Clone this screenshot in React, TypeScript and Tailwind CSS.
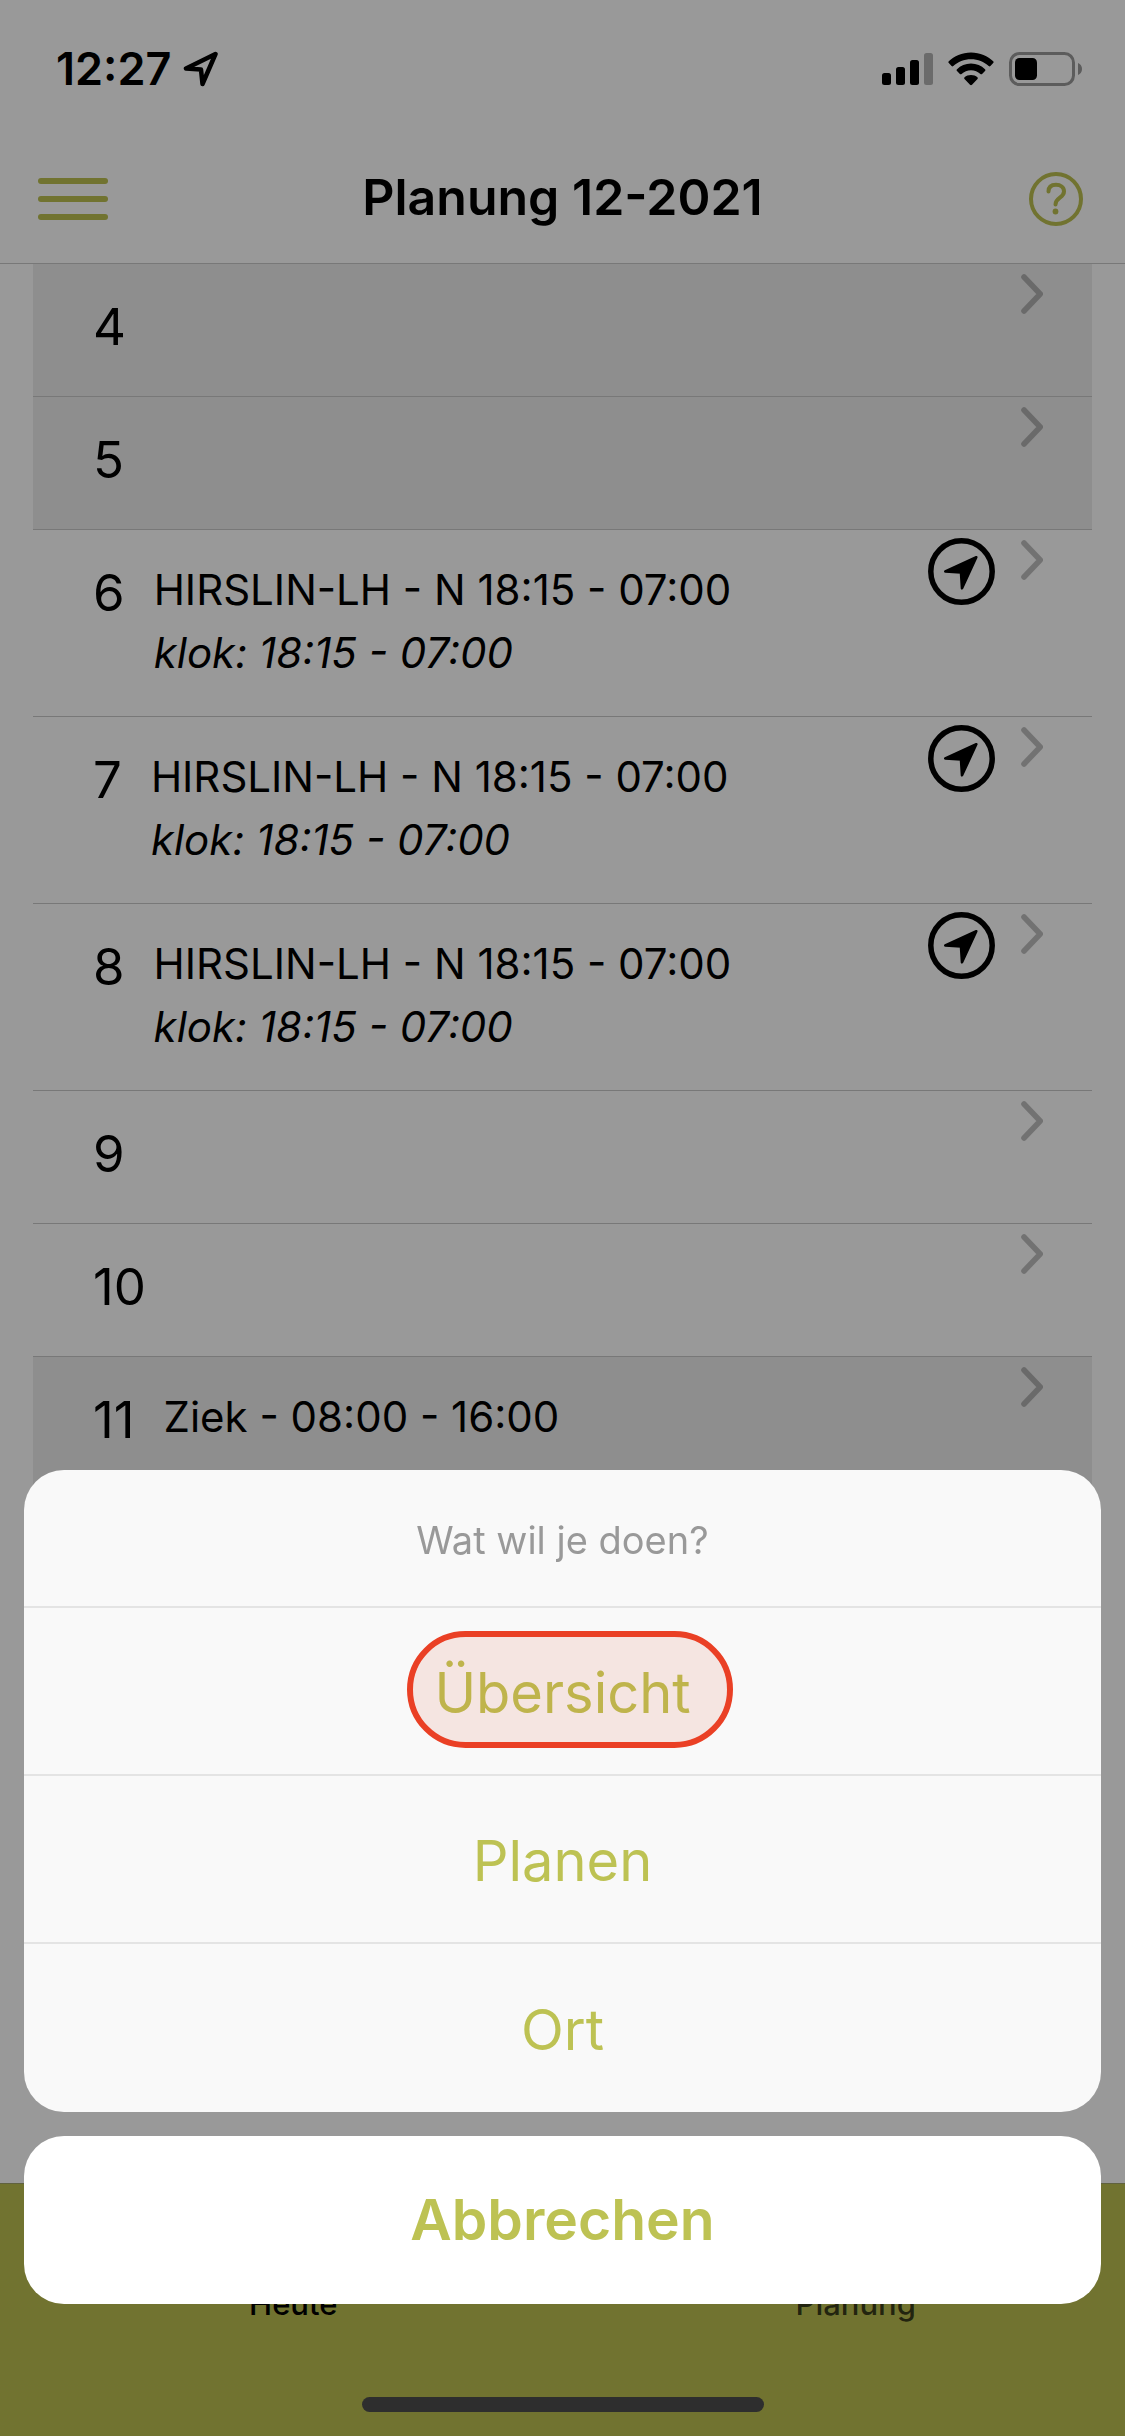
type Day = {
  day: number;
  shift?: string;
  clock?: string;
  muted?: boolean;
};

const days: Day[] = [
  { day: 4, muted: true },
  { day: 5, muted: true },
  { day: 6, shift: "HIRSLIN-LH - N 18:15 - 07:00", clock: "klok: 18:15 - 07:00" },
  { day: 7, shift: "HIRSLIN-LH - N 18:15 - 07:00", clock: "klok: 18:15 - 07:00" },
  { day: 8, shift: "HIRSLIN-LH - N 18:15 - 07:00", clock: "klok: 18:15 - 07:00" },
  { day: 9 },
  { day: 10 },
  { day: 11, shift: "Ziek - 08:00 - 16:00", muted: true },
];

function StatusBar() {
  return (
    <div className="flex items-center justify-between h-[138px] pl-[56px] pr-[42px]">
      <div className="flex items-center gap-3">
        <span className="text-[45px] leading-[54px] font-semibold">12:27</span>
        <svg className="w-9 h-9" viewBox="0 0 36 36" fill="none" stroke="black" strokeWidth="4.5" strokeLinejoin="round">
          <path d="M32.5 3 L3 17.5 L18 18.5 L19.5 33 Z" />
        </svg>
      </div>
      <div className="flex items-center gap-[15px]">
        <svg className="w-[51px] h-[34px]" viewBox="0 0 51 34">
          <rect x="0" y="21" width="9" height="12" rx="2.5" />
          <rect x="14" y="15" width="9" height="18" rx="2.5" />
          <rect x="28" y="8" width="9" height="25" rx="2.5" />
          <rect x="42" y="1" width="9" height="32" rx="2.5" fillOpacity="0.3" />
        </svg>
        <svg className="w-[46px] h-[34px]" viewBox="0 0 46 34">
          <path d="M23 0.5 C14 0.5 6 4 0.8 9.3 C0.2 9.9 0.2 10.5 0.8 11.1 L3.6 14 C4.1 14.5 4.8 14.5 5.3 14 C10 9.6 16 7.2 23 7.2 C30 7.2 36 9.6 40.7 14 C41.2 14.5 41.9 14.5 42.4 14 L45.2 11.1 C45.8 10.5 45.8 9.9 45.2 9.3 C40 4 32 0.5 23 0.5 Z" />
          <path d="M23 11.6 C17.5 11.6 12.6 13.7 9 17.2 C8.4 17.8 8.4 18.4 9 19 L11.9 21.9 C12.4 22.4 13 22.4 13.6 21.9 C16.1 19.6 19.4 18.2 23 18.2 C26.6 18.2 29.9 19.6 32.4 21.9 C33 22.4 33.6 22.4 34.1 21.9 L37 19 C37.6 18.4 37.6 17.8 37 17.2 C33.4 13.7 28.5 11.6 23 11.6 Z" />
          <path d="M23 23 C20.4 23 18.2 23.9 16.6 25.3 C16 25.9 16 26.5 16.5 27 L22 32.7 C22.6 33.3 23.4 33.3 24 32.7 L29.5 27 C30 26.5 30 25.9 29.4 25.3 C27.8 23.9 25.6 23 23 23 Z" />
        </svg>
        <svg className="w-[74px] h-[34px]" viewBox="0 0 74 34">
          <rect x="1.5" y="1.5" width="63" height="31" rx="9" fill="none" stroke="black" strokeOpacity="0.4" strokeWidth="3" />
          <rect x="6" y="6" width="22" height="22" rx="4.5" />
          <path d="M69 11 C71.5 12 73 14.3 73 17 C73 19.7 71.5 22 69 23 Z" fillOpacity="0.4" />
        </svg>
      </div>
    </div>
  );
}

function Header() {
  return (
    <header className="border-b border-[#c8c8c8]">
      <StatusBar />
      <div className="grid grid-cols-[1fr_auto_1fr] items-center h-[125px] px-[38px] pb-1">
        <button type="button" aria-label="Menü" className="flex flex-col gap-3 w-[70px]">
          <span className="h-[6px] rounded-full bg-[#bcc050]" />
          <span className="h-[6px] rounded-full bg-[#bcc050]" />
          <span className="h-[6px] rounded-full bg-[#bcc050]" />
        </button>
        <h1 className="pb-1 text-[50px] leading-[60px] font-semibold">Planung 12-2021</h1>
        <button type="button" aria-label="Hilfe" className="justify-self-end">
          <svg className="w-[62px] h-[54px]" viewBox="0 0 62 54" fill="none" stroke="#bcc050" strokeLinecap="round">
            <circle cx="31" cy="27" r="25" strokeWidth="4" />
            <path d="M23.5 19.5 C23.5 15 26.5 12.8 31 12.8 C35.5 12.8 39 15.3 39 19.5 C39 26 30.5 25.5 30.5 32.5" strokeWidth="4" />
            <circle cx="30.5" cy="39.5" r="2.9" fill="#bcc050" stroke="none" />
          </svg>
        </button>
      </div>
    </header>
  );
}

function DayRow({ day, shift, clock, muted }: Day) {
  return (
    <li className={`flex items-start min-h-[133px] border-b border-[#c8c8c8] ${muted ? "bg-[#ededed]" : "bg-white"}`}>
      <div className="flex flex-1 items-start gap-[29px] pl-[60px] pt-7 pb-8">
        <span className="text-[51px] leading-[70px]">{day}</span>
        {shift && (
          <div className="text-[42px] leading-[63px]">
            <p>{shift}</p>
            {clock && <p className="italic">{clock}</p>}
          </div>
        )}
      </div>
      <div className="flex items-start gap-[26px] pt-2 pr-[49px]">
        {clock && (
          <svg className="w-[67px] h-[67px]" viewBox="0 0 67 67">
            <circle cx="33.5" cy="33.5" r="30.7" fill="none" stroke="black" strokeWidth="5.5" />
            <path d="M48.3 19.3 L17.3 33.4 L33 34.5 L34 50.3 Z" stroke="black" strokeWidth="2.6" strokeLinejoin="round" />
          </svg>
        )}
        <svg className="w-[22px] h-[44px]" viewBox="0 0 22 44" fill="none" stroke="black" strokeOpacity="0.25" strokeWidth="5.6" strokeLinecap="round" strokeLinejoin="round">
          <path d="M3 5 L19.2 22 L3 39" />
        </svg>
      </div>
    </li>
  );
}

function ActionSheet() {
  return (
    <div className="fixed inset-0 flex flex-col justify-end gap-6 bg-black/40 px-6 pb-[132px]">
      <div className="rounded-[40px] bg-[#f9f9f9] overflow-hidden text-[#bdc253]">
        <p className="flex items-center justify-center h-[138px] pt-1 border-b-2 border-[#e4e4e4] text-[38px] text-[#999999]">
          Wat wil je doen?
        </p>
        <button type="button" className="relative block w-full h-[168px] pt-1 border-b-2 border-[#e4e4e4] text-[56px]">
          Übersicht
          <span className="absolute top-[23px] left-[calc(50%-156px)] w-[326px] h-[117px] rounded-full border-[6px] border-[#ea4025] bg-[#d53c14]/10 bg-clip-padding" />
        </button>
        <button type="button" className="block w-full h-[168px] pt-1 border-b-2 border-[#e4e4e4] text-[56px]">
          Planen
        </button>
        <button type="button" className="block w-full h-[168px] pt-1 text-[56px]">
          Ort
        </button>
      </div>
      <button type="button" className="h-[168px] rounded-[40px] bg-white text-[#bdc253] text-[57px] font-semibold">
        Abbrechen
      </button>
    </div>
  );
}

export default function App() {
  return (
    <div className="min-h-screen flex flex-col bg-white text-black font-['Inter',sans-serif]">
      <Header />
      <main className="flex-1 px-[33px]">
        <ul>
          {days.map((item) => (
            <DayRow key={item.day} {...item} />
          ))}
        </ul>
      </main>
      <nav className="grid grid-cols-2 h-[253px] pt-[102px] border-t border-[#a0a46a] bg-[#bcc050] text-center text-[31px] leading-9 font-medium">
        <a href="#heute" className="pl-6">Heute</a>
        <a href="#planung" className="pl-6 text-black/70">Planung</a>
      </nav>
      <ActionSheet />
      <div className="fixed bottom-6 left-1/2 -translate-x-1/2 w-[402px] h-[15px] rounded-full bg-[#2e2e2e]" />
    </div>
  );
}
